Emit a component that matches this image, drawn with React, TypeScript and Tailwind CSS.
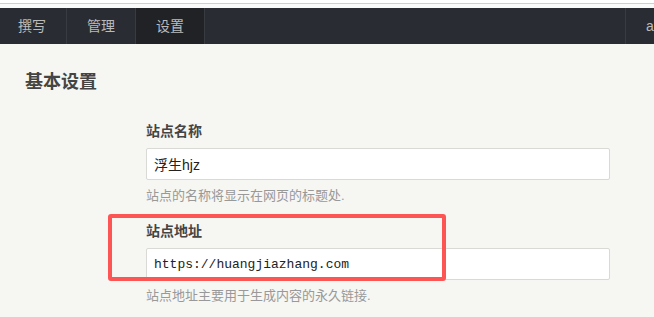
export default function App() {
  const font = "font-['Liberation_Sans','Noto_Sans_CJK_SC',sans-serif]";
  return (
    <div className={`relative w-[654px] h-[317px] overflow-hidden bg-[#f6f6f3] ${font}`}>
      {/* browser edge */}
      <div className="h-[3px] bg-white" />
      <div className="h-px bg-[#cfcfcf]" />
      <div className="h-[4px] bg-[#fafafa]" />

      {/* Top nav */}
      <nav className="flex h-[36px] bg-[#292d33] text-[14px] text-[#bbbbbb] overflow-hidden">
        <a className="flex w-[67px] shrink-0 items-center border-r border-[#383b41] pl-[18px]">撰写</a>
        <a className="flex w-[69px] shrink-0 items-center border-r border-[#383b41] pl-[20px]">管理</a>
        <a className="flex w-[69px] shrink-0 items-center border-r border-[#383b41] bg-[#202226] pl-[20px]">设置</a>
        <div className="flex-1" />
        <div className="flex w-[29px] shrink-0 items-center border-l border-[#383b41] pl-[20px] whitespace-nowrap">
          a
        </div>
      </nav>

      <main className="px-[25px]">
        <h2 className="mt-[26px] text-[18px] leading-[24px] font-bold text-[#444]">基本设置</h2>

        <div className="ml-[121px] w-[464px] mt-[27px]">
          <label className="block text-[14px] leading-[20px] font-bold text-[#444]">站点名称</label>
          <input
            readOnly
            value="浮生hjz"
            className="mt-[7px] block h-[32px] w-full rounded-[2px] border border-[#d9d9d6] bg-white px-[7px] text-[14px] text-[#222] outline-none"
          />
          <p className="mt-[6px] text-[13px] leading-[20px] text-[#999]">站点的名称将显示在网页的标题处.</p>

          <label className="mt-[15px] block text-[14px] leading-[20px] font-bold text-[#444]">站点地址</label>
          <input
            readOnly
            value="https://huangjiazhang.com"
            className="mt-[7px] block h-[32px] w-full rounded-[2px] border border-[#d9d9d6] bg-white px-[7px] font-['Liberation_Mono',monospace] text-[13px] text-[#222] outline-none"
          />
          <p className="mt-[6px] text-[13px] leading-[20px] text-[#999]">站点地址主要用于生成内容的永久链接.</p>
        </div>
      </main>

      {/* annotation box */}
      <div className="pointer-events-none absolute left-[108px] top-[214px] h-[67px] w-[338px] rounded-[3px] border-4 border-[#fd5454]" />
    </div>
  );
}
